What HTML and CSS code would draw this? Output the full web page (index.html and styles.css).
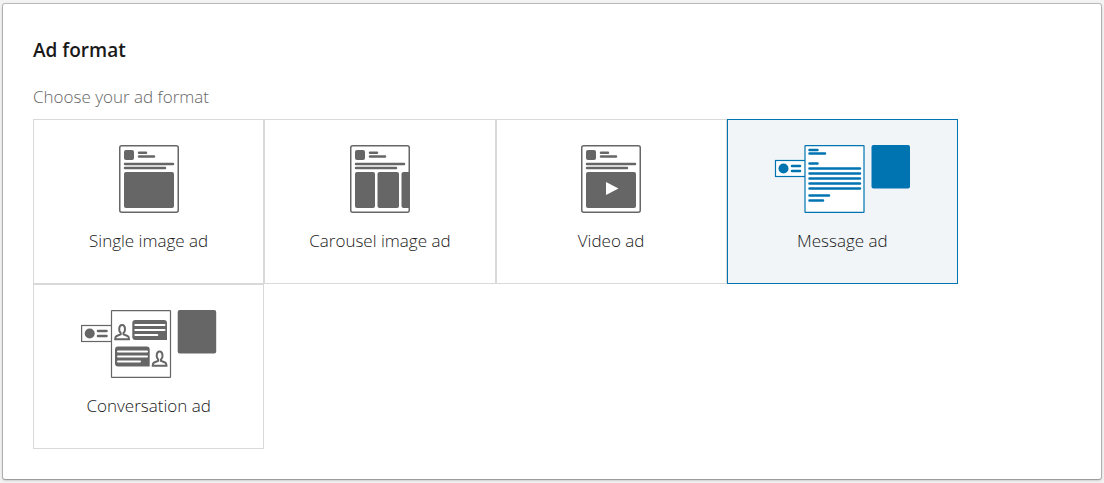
FILE: index.html
```html
<!DOCTYPE html>
<html lang="en">
<head>
    <meta charset="UTF-8">
    <meta name="viewport" content="width=device-width, initial-scale=1.0">
    <title>Ad format</title>
    <link rel="stylesheet" href="styles.css">
</head>
<body>
    <section class="card">
        <h2>Ad format</h2>
        <form>
            <fieldset class="format-group">
                <legend>Choose your ad format</legend>
                <div class="format-list">
                    <!-- Single image -->
                    <div class="format-item">
                        <input type="radio" id="format-single" name="format" value="single">
                        <label for="format-single">
                            <svg class="icon" width="60" height="68" viewBox="0 0 60 68" aria-hidden="true">
                                <rect class="page" x="0.75" y="0.75" width="58.5" height="66.5" rx="2"/>
                                <rect x="5" y="5" width="10" height="10" rx="2"/>
                                <path class="line" d="M20 7.75h7M20 11.5h15M6 19h48M6 23h40"/>
                                <rect x="5" y="27" width="50" height="36" rx="2"/>
                            </svg>
                            <span>Single image ad</span>
                        </label>
                    </div>

                    <!-- Carousel -->
                    <div class="format-item">
                        <input type="radio" id="format-carousel" name="format" value="carousel">
                        <label for="format-carousel">
                            <svg class="icon" width="60" height="68" viewBox="0 0 60 68" aria-hidden="true">
                                <rect class="page" x="0.75" y="0.75" width="58.5" height="66.5" rx="2"/>
                                <rect x="5" y="5" width="10" height="10" rx="2"/>
                                <path class="line" d="M20 7.75h7M20 11.5h15M6 19h48M6 23h40"/>
                                <rect x="5" y="27" width="20" height="36" rx="2"/>
                                <rect x="27.5" y="27" width="21.5" height="36" rx="2"/>
                                <path d="M59 27h-5.5a2 2 0 0 0-2 2v32a2 2 0 0 0 2 2h5.5z"/>
                            </svg>
                            <span>Carousel image ad</span>
                        </label>
                    </div>

                    <!-- Video -->
                    <div class="format-item">
                        <input type="radio" id="format-video" name="format" value="video">
                        <label for="format-video">
                            <svg class="icon" width="60" height="68" viewBox="0 0 60 68" aria-hidden="true">
                                <rect class="page" x="0.75" y="0.75" width="58.5" height="66.5" rx="2"/>
                                <rect x="5" y="5" width="10" height="10" rx="2"/>
                                <path class="line" d="M20 7.75h7M20 11.5h15M6 19h48M6 23h40"/>
                                <rect x="5" y="27" width="50" height="36" rx="2"/>
                                <path class="play" d="M25 37v13l12.5-6.5z"/>
                            </svg>
                            <span>Video ad</span>
                        </label>
                    </div>

                    <!-- Message -->
                    <div class="format-item">
                        <input type="radio" id="format-message" name="format" value="message" checked>
                        <label for="format-message">
                            <svg class="icon" width="136" height="68" viewBox="0 0 136 68" aria-hidden="true">
                                <rect class="page thin" x="1.5" y="15.5" width="30" height="16"/>
                                <circle cx="9.5" cy="23.5" r="5"/>
                                <path class="line" d="M18 21h8M18 26h8"/>
                                <rect class="page thin" x="31" y="0.6" width="59" height="66.8" rx="0.5"/>
                                <path class="line" d="M35.5 5h8M35.5 8.5h15.500M35.5 18.5h8M35.5 23.5h50.5M35.5 28.5h50.5M35.5 33.5h50.5M35.5 38.5h50.5M35.5 43.5h50.5M35.5 50.5h19.5M35.5 55.5h13.5"/>
                                <rect x="97.500" y="0" width="38.500" height="43.500" rx="2"/>
                            </svg>
                            <span>Message ad</span>
                        </label>
                    </div>

                    <!-- Conversation -->
                    <div class="format-item">
                        <input type="radio" id="format-conversation" name="format" value="conversation">
                        <label for="format-conversation">
                            <svg class="icon" width="136" height="68" viewBox="0 0 136 68" aria-hidden="true">
                                <rect class="page thin" x="0.6" y="15.5" width="31" height="16"/>
                                <circle cx="8.7" cy="23.5" r="5"/>
                                <path class="line" d="M17 21h8.5M17 26h8.5"/>
                                <rect class="page thin" x="30.500" y="0.6" width="59" height="66.8" rx="0.5"/>
                                <path class="person" d="M38.2 19.500c0-2.800 1-4.500 2.900-4.500s2.900 1.700 2.900 4.500c0 1.700-.6 2.700-1.500 3.500v1.400l4.100 1.600c1 .4 1.400 1.200 1.400 3.200h-13.800c0-2 .4-2.800 1.400-3.200l4.100-1.600v-1.400c-.9-.8-1.500-1.800-1.500-3.500z"/>
                                <path d="M54.500 10h28.500a3 3 0 0 1 3 3v17h-31.700a3 3 0 0 1-3-3v-14a3 3 0 0 1 3-3z"/>
                                <path class="bubble-line" d="M54.300 15h29.200M54.300 20h29.200M54.300 25h22"/>
                                <path d="M37 36.500h28.700a3 3 0 0 1 3 3v17h-31.700a3 3 0 0 1-3-3v-14a3 3 0 0 1 3-3z"/>
                                <path class="bubble-line" d="M37 41.500h29M37 46.500h29M37 51.500h22"/>
                                <path class="person" d="M75.700 46c0-2.800 1-4.500 2.900-4.500s2.900 1.700 2.900 4.500c0 1.700-.6 2.700-1.500 3.500v1.400l4.100 1.600c1 .4 1.400 1.200 1.400 3.200h-13.800c0-2 .4-2.800 1.400-3.200l4.100-1.600v-1.400c-.9-.8-1.500-1.800-1.500-3.500z"/>
                                <rect x="96.700" y="0" width="38.500" height="43.500" rx="2"/>
                            </svg>
                            <span>Conversation ad</span>
                        </label>
                    </div>
                </div>
            </fieldset>
        </form>
    </section>
</body>
</html>
```
FILE: styles.css
```css
* {
    box-sizing: border-box;
}

body {
    font-family: 'Open Sans', 'Noto Sans', sans-serif;
    font-weight: 350;
    background-color: #f3f3f3;
    margin: 0;
    padding: 4px 3px;
}

.card {
    padding: 30px;
    background-color: white;
    border-radius: 2px;
    box-shadow: 0 0 0 1px rgba(0, 0, 0, 0.2), 0 1px 3px rgba(0, 0, 0, 0.3);
}

h2 {
    margin: 0 0 18px;
    font-size: 19px;
    line-height: 32px;
    font-weight: 600;
    color: #191919;
}

.format-group {
    margin: 0;
    padding: 0;
    border: none;
}

legend {
    padding: 0 0 10px;
    font-size: 17px;
    line-height: 25px;
    color: #666;
}

.format-list {
    display: grid;
    grid-template-columns: repeat(4, 1fr);
    max-width: 925px;
}

.format-item {
    position: relative;
}

.format-item input {
    position: absolute;
    margin: 0;
    opacity: 0;
}

.format-item label {
    display: flex;
    flex-direction: column;
    align-items: center;
    gap: 15px;
    height: 165px;
    padding-top: 25px;
    border: 1px solid #d9d9d9;
    font-size: 17px;
    line-height: 25px;
    color: #191919;
    cursor: pointer;
}

.format-item input:checked + label {
    background-color: #f1f5f8;
    border-color: #0073b1;
}

/* icons take the colour of the tile state */
.icon {
    color: #666;
    fill: currentColor;
}

.format-item input:checked + label .icon {
    color: #0073b1;
}

.icon .page {
    fill: white;
    stroke: currentColor;
    stroke-width: 1.5;
}

.icon .thin {
    stroke-width: 1.2;
}

.icon .line {
    fill: none;
    stroke: currentColor;
    stroke-width: 2.5;
    stroke-linecap: round;
}

.icon .play {
    fill: white;
}

.icon .person {
    fill: none;
    stroke: currentColor;
    stroke-width: 2;
}

.icon .bubble-line {
    fill: none;
    stroke: white;
    stroke-width: 2;
    stroke-linecap: round;
}

@media (max-width: 700px) {
    .format-list {
        grid-template-columns: repeat(2, 1fr);
    }
}
```
